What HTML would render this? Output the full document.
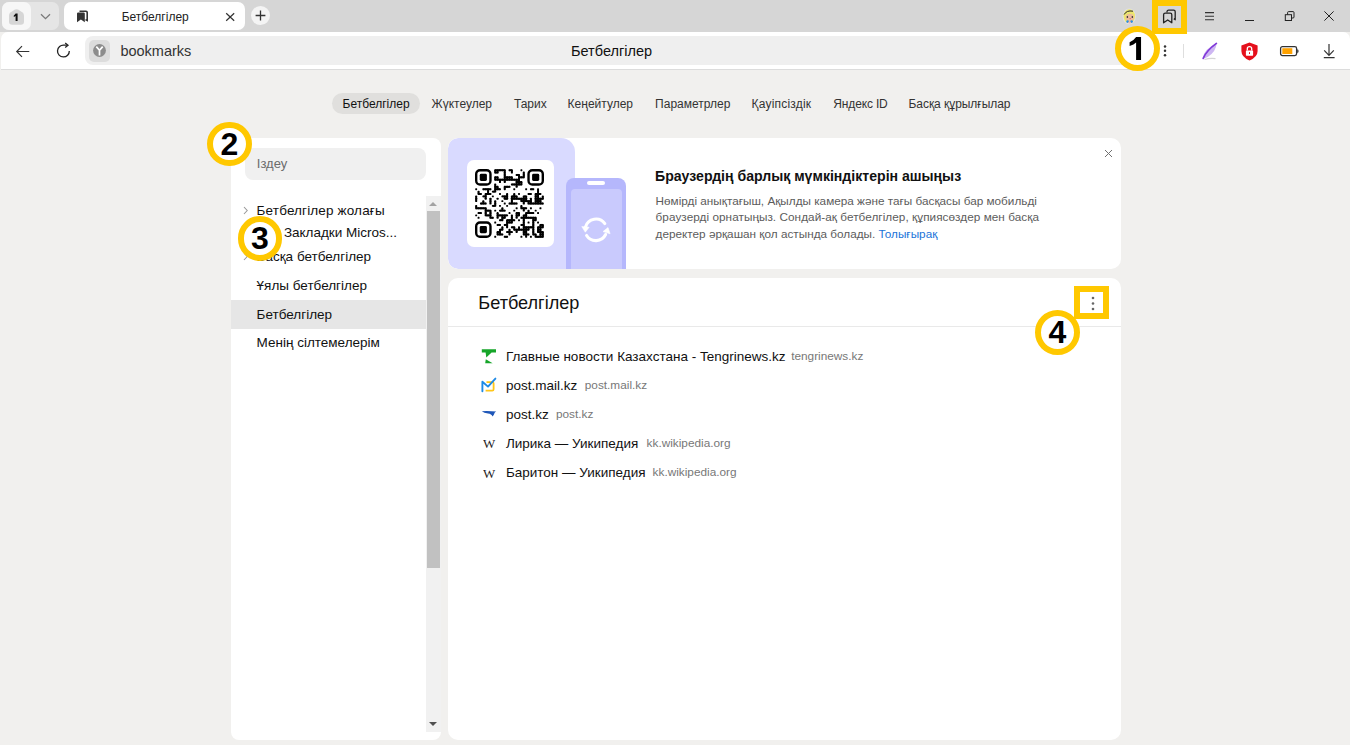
<!DOCTYPE html>
<html><head><meta charset="utf-8">
<style>
*{box-sizing:border-box;margin:0;padding:0}
html,body{width:1350px;height:745px;overflow:hidden}
body{background:#f1f0ee;font-family:"Liberation Sans",sans-serif;color:#000;position:relative}
.abs{position:absolute}
.t{position:absolute;white-space:nowrap;line-height:1}
svg{position:absolute;overflow:visible}
</style></head>
<body>
<div class="abs" style="left:0;top:0;width:1350px;height:32px;background:#d6d6d6"></div>
<div class="abs" style="left:2px;top:2px;width:57px;height:28px;background:#e5e5e5;border-radius:7px"></div>
<div class="abs" style="left:2px;top:2px;width:29px;height:28px;background:#f7f7f7;border-radius:7px"></div>
<svg style="left:8px;top:8px" width="17" height="18" viewBox="0 0 17 18"><path d="M7 1.6 Q8.5 0.8 10 1.6 L14.6 4.6 Q16 5.6 16 7.4 V13.5 Q16 16.7 12.8 16.7 H4.2 Q1 16.7 1 13.5 V7.4 Q1 5.6 2.4 4.6 Z" fill="#d6d6d6"/></svg>
<svg style="left:13px;top:12.5px" width="6" height="9" viewBox="0 0 6 9"><path d="M2.6 0.6 H4.6 V7.9 H2.6 V3.1 Q1.8 3.6 0.8 3.9 V2.4 Q2 1.8 2.6 0.6 Z" fill="#111"/></svg>
<svg style="left:40px;top:13px" width="11" height="7" viewBox="0 0 11 7"><path d="M1 1.2 L5.5 5.6 L10 1.2" fill="none" stroke="#7a7a7a" stroke-width="1.3"/></svg>
<div class="abs" style="left:64px;top:2px;width:181px;height:28px;background:#fff;border-radius:7px"></div>
<svg style="left:76px;top:10px" width="12" height="13" viewBox="0 0 12 13"><path d="M3.5 1.2 H10 Q11.2 1.2 11.2 2.4 V10.5 L9.5 9.6" fill="none" stroke="#333" stroke-width="1.6"/><path d="M1 3.6 Q1 2.4 2.2 2.4 H7.6 Q8.8 2.4 8.8 3.6 V12.2 L4.9 9.6 L1 12.2 Z" fill="#333"/></svg>
<div class="t" style="left:121.70px;top:10.85px;font-size:12px;color:#222;font-weight:normal;">Бетбелгілер</div>
<svg style="left:225.8px;top:12.7px" width="8.4" height="8" viewBox="0 0 8.4 8"><path d="M0.2 0.2 L8.2 7.8 M8.2 0.2 L0.2 7.8" stroke="#333" stroke-width="1.2"/></svg>
<div class="abs" style="left:250.9px;top:5.7px;width:19.6px;height:19.6px;background:#f4f4f4;border-radius:50%"></div>
<svg style="left:255.2px;top:10.0px" width="11" height="11" viewBox="0 0 11 11"><path d="M5.5 0.6 V10.4 M0.6 5.5 H10.4" stroke="#333" stroke-width="1.3"/></svg>
<svg style="left:1122px;top:8px" width="15" height="17" viewBox="0 0 15 17">
<ellipse cx="7.2" cy="8.4" rx="6.6" ry="7.9" fill="#e2e2e6"/>
<ellipse cx="7.3" cy="8.3" rx="5.7" ry="7" fill="#ece66e"/>
<ellipse cx="7.8" cy="9.6" rx="4.1" ry="3.9" fill="#ebbd9a"/>
<ellipse cx="5.4" cy="9.1" rx="0.75" ry="1" fill="#333"/><ellipse cx="10.3" cy="9.1" rx="0.75" ry="1" fill="#333"/>
<circle cx="8.2" cy="10.6" r="0.7" fill="#e04a8a"/>
<circle cx="5.6" cy="13.6" r="1.3" fill="#2a8ee8"/><circle cx="9.6" cy="13.6" r="1.3" fill="#2a8ee8"/>
<ellipse cx="7.6" cy="14.6" rx="1.4" ry="1" fill="#f0b0b8"/>
<path d="M2.2 6.5 Q4.5 2 11 3.2" stroke="#2a2a2a" stroke-width="1" fill="none"/>
</svg>
<svg style="left:1162px;top:9px" width="15" height="16" viewBox="0 0 15 16"><path d="M5 3.6 V2.8 Q5 1.2 6.6 1.2 H11.6 Q13.2 1.2 13.2 2.8 V10.8 L11.8 9.8" fill="none" stroke="#222" stroke-width="1.3" stroke-linejoin="round"/><path d="M1.6 13.8 V5.8 Q1.6 4.2 3.2 4.2 H8.2 Q9.8 4.2 9.8 5.8 V13.8 L5.7 11 Z" fill="none" stroke="#222" stroke-width="1.3" stroke-linejoin="round"/></svg>
<svg style="left:1204px;top:11px" width="11" height="10" viewBox="0 0 11 10"><path d="M1 1.6 H10 M1 5.2 H10 M1 8.8 H10" stroke="#333" stroke-width="1.1"/></svg>
<div class="abs" style="left:1245px;top:19.8px;width:9px;height:1px;background:#222"></div>
<svg style="left:1283px;top:10px" width="13" height="13" viewBox="0 0 13 13"><rect x="2.3" y="4.7" width="6.2" height="5.8" fill="none" stroke="#222" stroke-width="1"/><path d="M4.6 4.7 V2.6 Q4.6 1.6 5.6 1.6 H10 Q11 1.6 11 2.6 V7 Q11 8 10 8 H8.5" fill="none" stroke="#222" stroke-width="1"/></svg>
<svg style="left:1324px;top:11px" width="10" height="10" viewBox="0 0 10 10"><path d="M0.4 0.4 L9.6 9.6 M9.6 0.4 L0.4 9.6" stroke="#222" stroke-width="1"/></svg>
<div class="abs" style="left:1px;top:32px;width:1349px;height:38px;background:#fff;border-radius:7px 7px 0 0;border-bottom:1px solid #dcdcdc"></div>
<svg style="left:15px;top:44px" width="16" height="15" viewBox="0 0 16 15"><path d="M14.3 7.5 H2 M7 2.1 L1.7 7.5 L7 12.9" fill="none" stroke="#333" stroke-width="1.15"/></svg>
<svg style="left:55.8px;top:42.2px" width="17" height="17" viewBox="0 0 17 17"><path d="M13.3 8.9 A5.9 5.9 0 1 1 8 3.2 H11" fill="none" stroke="#222" stroke-width="1.3"/><path d="M9.2 0.9 L12 3.2 L9.2 5.5" fill="none" stroke="#222" stroke-width="1.3"/></svg>
<div class="abs" style="left:85px;top:36px;width:1070px;height:29px;background:#efefef;border-radius:8px"></div>
<div class="abs" style="left:89px;top:40px;width:21px;height:21.5px;background:#dcdcdc;border-radius:5px"></div>
<svg style="left:93px;top:44px" width="13" height="13" viewBox="0 0 13 13"><circle cx="6.5" cy="6.5" r="6.4" fill="#8c8c8c"/><path d="M3.3 2.6 L6.5 6.3 L9.7 2.6 M6.5 6.3 V11.5" fill="none" stroke="#fff" stroke-width="1.7"/></svg>
<div class="t" style="left:120.40px;top:43.74px;font-size:14.5px;color:#333;font-weight:normal;">bookmarks</div>
<div class="t" style="left:571.00px;top:43.74px;font-size:14.5px;color:#111;font-weight:normal;">Бетбелгілер</div>
<svg style="left:1163px;top:45px" width="4" height="12" viewBox="0 0 4 12"><circle cx="2" cy="1.4" r="1.25" fill="#333"/><circle cx="2" cy="5.8" r="1.25" fill="#333"/><circle cx="2" cy="10.2" r="1.25" fill="#333"/></svg>
<div class="abs" style="left:1183px;top:44px;width:1px;height:14px;background:#dedede"></div>
<svg style="left:1201px;top:42px" width="18" height="19" viewBox="0 0 18 19">
<path d="M1.8 16.8 Q1.8 7.6 15.8 1 Q14.8 10 7 14.8 Q4.5 16.2 1.8 16.8 Z" fill="#cdb6f2"/>
<path d="M2.2 16.4 Q5.5 8.5 15.4 1.4" fill="none" stroke="#8038d8" stroke-width="1.7" stroke-linecap="round"/>
<path d="M3.5 17.6 Q9 15.8 14.5 16.6" fill="none" stroke="#d4d4d4" stroke-width="1.1"/>
</svg>
<svg style="left:1240px;top:41.5px" width="19" height="19" viewBox="0 0 19 19">
<path d="M9.5 0.6 L17.6 3.6 V9 Q17.6 15 9.5 18.5 Q1.4 15 1.4 9 V3.6 Z" fill="#e5101c"/>
<rect x="5.9" y="8.4" width="7.2" height="5.3" rx="0.6" fill="#fff"/>
<path d="M7.3 8.6 V6.8 Q7.3 4.7 9.5 4.7 Q11.7 4.7 11.7 6.8 V8.6" fill="none" stroke="#fff" stroke-width="1.3"/>
<rect x="9" y="10.2" width="1" height="1.8" fill="#e5101c"/>
</svg>
<svg style="left:1279px;top:45px" width="21" height="12" viewBox="0 0 21 12">
<rect x="1.6" y="1.6" width="16" height="9" rx="1.8" fill="#fff" stroke="#333" stroke-width="1.3"/>
<rect x="3.3" y="3.2" width="10" height="5.8" fill="#ffa200"/>
<path d="M18.2 4.2 Q19.6 4.2 19.6 6.1 Q19.6 8 18.2 8 Z" fill="#333"/>
</svg>
<svg style="left:1322px;top:43px" width="14" height="16" viewBox="0 0 14 16"><path d="M7 1 V12.3 M2.2 7.4 L7 12.3 L11.8 7.4 M1.8 14.6 H12.6" fill="none" stroke="#333" stroke-width="1.2"/></svg>
<div class="abs" style="left:332px;top:93px;width:88px;height:21px;background:#e0dfdd;border-radius:11px"></div>
<div class="t" style="left:342.50px;top:97.85px;font-size:12px;color:#111;font-weight:normal;">Бетбелгілер</div>
<div class="t" style="left:431.60px;top:97.85px;font-size:12px;color:#333;font-weight:normal;">Жүктеулер</div>
<div class="t" style="left:513.90px;top:97.85px;font-size:12px;color:#333;font-weight:normal;">Тарих</div>
<div class="t" style="left:567.60px;top:97.85px;font-size:12px;color:#333;font-weight:normal;">Кеңейтулер</div>
<div class="t" style="left:655.10px;top:97.85px;font-size:12px;color:#333;font-weight:normal;">Параметрлер</div>
<div class="t" style="left:751.60px;top:97.85px;font-size:12px;color:#333;font-weight:normal;letter-spacing:0.2px">Қауіпсіздік</div>
<div class="t" style="left:833.30px;top:97.85px;font-size:12px;color:#333;font-weight:normal;letter-spacing:-0.15px">Яндекс ID</div>
<div class="t" style="left:908.50px;top:97.85px;font-size:12px;color:#333;font-weight:normal;letter-spacing:-0.05px">Басқа құрылғылар</div>
<div class="abs" style="left:231px;top:138px;width:210px;height:602px;background:#fff;border-radius:8px;overflow:hidden"></div>
<div class="abs" style="left:245px;top:148px;width:181px;height:32px;background:#f0f0f0;border-radius:8px"></div>
<div class="t" style="left:256.80px;top:157.01px;font-size:13px;color:#6b6b6b;font-weight:normal;">Іздеу</div>
<div class="abs" style="left:426px;top:196px;width:15px;height:536px;background:#f1f1f1"></div>
<div class="abs" style="left:427px;top:211px;width:13px;height:357px;background:#c1c1c1"></div>
<svg style="left:428px;top:201px" width="10" height="6" viewBox="0 0 10 6"><path d="M1 5 L5 1 L9 5 Z" fill="#a3a3a3"/></svg>
<svg style="left:428px;top:721px" width="10" height="6" viewBox="0 0 10 6"><path d="M1 1 L5 5 L9 1 Z" fill="#505050"/></svg>
<div class="abs" style="left:231px;top:300px;width:195px;height:28.5px;background:#e6e6e6"></div>
<svg style="left:242px;top:206px" width="7" height="9" viewBox="0 0 7 9"><path d="M2 1 L5.2 4.5 L2 8" fill="none" stroke="#9a9a9a" stroke-width="1.1"/></svg>
<svg style="left:242px;top:252px" width="7" height="9" viewBox="0 0 7 9"><path d="M2 1 L5.2 4.5 L2 8" fill="none" stroke="#9a9a9a" stroke-width="1.1"/></svg>
<div class="t" style="left:256.60px;top:203.58px;font-size:13.5px;color:#111;font-weight:normal;letter-spacing:0.15px">Бетбелгілер жолағы</div>
<div class="t" style="left:283.90px;top:225.58px;font-size:13.5px;color:#111;font-weight:normal;">Закладки Micros...</div>
<div class="t" style="left:256.60px;top:249.58px;font-size:13.5px;color:#111;font-weight:normal;">Басқа бетбелгілер</div>
<div class="t" style="left:256.60px;top:278.58px;font-size:13.5px;color:#111;font-weight:normal;">Ұялы бетбелгілер</div>
<div class="t" style="left:256.60px;top:307.58px;font-size:13.5px;color:#111;font-weight:normal;">Бетбелгілер</div>
<div class="t" style="left:256.60px;top:335.58px;font-size:13.5px;color:#111;font-weight:normal;">Менің сілтемелерім</div>
<div class="abs" style="left:448px;top:138px;width:673px;height:131px;background:#fff;border-radius:10px;overflow:hidden"><div class="abs" style="left:0;top:0;width:127px;height:131px;background:#d9daff;border-radius:10px 14px 0 10px"></div><div class="abs" style="left:118px;top:39.5px;width:60px;height:92px;background:#b5b7fc;border-radius:8px 8px 0 0"></div><div class="abs" style="left:122.8px;top:50.8px;width:50.8px;height:85px;background:#c9cafd;border-radius:4px"></div><div class="abs" style="left:139px;top:43.4px;width:18px;height:3.6px;background:#fff;border-radius:2px"></div></div>
<div class="abs" style="left:466.5px;top:160px;width:87px;height:87px;background:#fff;border-radius:7px"></div>
<svg class="abs" style="left:475px;top:169px" width="69" height="69" viewBox="0 0 69 69" fill="#000"><rect x="19.25" y="0.21" width="1.95" height="1.95" rx="0.59"/><rect x="20.22" y="0.21" width="2.38" height="1.95"/><rect x="19.25" y="1.19" width="1.95" height="2.38"/><rect x="21.63" y="0.21" width="1.95" height="1.95" rx="0.59"/><rect x="22.60" y="0.21" width="2.38" height="1.95"/><rect x="21.63" y="1.19" width="1.95" height="2.38"/><rect x="24.01" y="0.21" width="1.95" height="1.95" rx="0.59"/><rect x="24.98" y="0.21" width="2.38" height="1.95"/><rect x="26.39" y="0.21" width="1.95" height="1.95" rx="0.59"/><rect x="27.36" y="0.21" width="2.38" height="1.95"/><rect x="28.77" y="0.21" width="1.95" height="1.95" rx="0.59"/><rect x="28.77" y="1.19" width="1.95" height="2.38"/><rect x="33.52" y="0.21" width="1.95" height="1.95" rx="0.59"/><rect x="34.50" y="0.21" width="2.38" height="1.95"/><rect x="35.90" y="0.21" width="1.95" height="1.95" rx="0.59"/><rect x="35.90" y="1.19" width="1.95" height="2.38"/><rect x="45.42" y="0.21" width="1.95" height="1.95" rx="0.59"/><rect x="19.25" y="2.59" width="1.95" height="1.95" rx="0.59"/><rect x="20.22" y="2.59" width="2.38" height="1.95"/><rect x="21.63" y="2.59" width="1.95" height="1.95" rx="0.59"/><rect x="28.77" y="2.59" width="1.95" height="1.95" rx="0.59"/><rect x="28.77" y="3.57" width="1.95" height="2.38"/><rect x="35.90" y="2.59" width="1.95" height="1.95" rx="0.59"/><rect x="47.80" y="2.59" width="1.95" height="1.95" rx="0.59"/><rect x="47.80" y="3.57" width="1.95" height="2.38"/><rect x="28.77" y="4.97" width="1.95" height="1.95" rx="0.59"/><rect x="28.77" y="5.95" width="1.95" height="2.38"/><rect x="40.66" y="4.97" width="1.95" height="1.95" rx="0.59"/><rect x="41.64" y="4.97" width="2.38" height="1.95"/><rect x="43.04" y="4.97" width="1.95" height="1.95" rx="0.59"/><rect x="43.04" y="5.95" width="1.95" height="2.38"/><rect x="47.80" y="4.97" width="1.95" height="1.95" rx="0.59"/><rect x="47.80" y="5.95" width="1.95" height="2.38"/><rect x="19.25" y="7.35" width="1.95" height="1.95" rx="0.59"/><rect x="20.22" y="7.35" width="2.38" height="1.95"/><rect x="19.25" y="8.33" width="1.95" height="2.38"/><rect x="21.63" y="7.35" width="1.95" height="1.95" rx="0.59"/><rect x="21.63" y="8.33" width="1.95" height="2.38"/><rect x="28.77" y="7.35" width="1.95" height="1.95" rx="0.59"/><rect x="29.74" y="7.35" width="2.38" height="1.95"/><rect x="28.77" y="8.33" width="1.95" height="2.38"/><rect x="31.15" y="7.35" width="1.95" height="1.95" rx="0.59"/><rect x="32.12" y="7.35" width="2.38" height="1.95"/><rect x="31.15" y="8.33" width="1.95" height="2.38"/><rect x="33.52" y="7.35" width="1.95" height="1.95" rx="0.59"/><rect x="34.50" y="7.35" width="2.38" height="1.95"/><rect x="33.52" y="8.33" width="1.95" height="2.38"/><rect x="35.90" y="7.35" width="1.95" height="1.95" rx="0.59"/><rect x="35.90" y="8.33" width="1.95" height="2.38"/><rect x="43.04" y="7.35" width="1.95" height="1.95" rx="0.59"/><rect x="44.02" y="7.35" width="2.38" height="1.95"/><rect x="43.04" y="8.33" width="1.95" height="2.38"/><rect x="45.42" y="7.35" width="1.95" height="1.95" rx="0.59"/><rect x="46.40" y="7.35" width="2.38" height="1.95"/><rect x="47.80" y="7.35" width="1.95" height="1.95" rx="0.59"/><rect x="19.25" y="9.73" width="1.95" height="1.95" rx="0.59"/><rect x="20.22" y="9.73" width="2.38" height="1.95"/><rect x="21.63" y="9.73" width="1.95" height="1.95" rx="0.59"/><rect x="22.60" y="9.73" width="2.38" height="1.95"/><rect x="24.01" y="9.73" width="1.95" height="1.95" rx="0.59"/><rect x="24.98" y="9.73" width="2.38" height="1.95"/><rect x="24.01" y="10.71" width="1.95" height="2.38"/><rect x="26.39" y="9.73" width="1.95" height="1.95" rx="0.59"/><rect x="27.36" y="9.73" width="2.38" height="1.95"/><rect x="28.77" y="9.73" width="1.95" height="1.95" rx="0.59"/><rect x="29.74" y="9.73" width="2.38" height="1.95"/><rect x="28.77" y="10.71" width="1.95" height="2.38"/><rect x="31.15" y="9.73" width="1.95" height="1.95" rx="0.59"/><rect x="32.12" y="9.73" width="2.38" height="1.95"/><rect x="33.52" y="9.73" width="1.95" height="1.95" rx="0.59"/><rect x="34.50" y="9.73" width="2.38" height="1.95"/><rect x="35.90" y="9.73" width="1.95" height="1.95" rx="0.59"/><rect x="36.88" y="9.73" width="2.38" height="1.95"/><rect x="38.28" y="9.73" width="1.95" height="1.95" rx="0.59"/><rect x="39.26" y="9.73" width="2.38" height="1.95"/><rect x="40.66" y="9.73" width="1.95" height="1.95" rx="0.59"/><rect x="41.64" y="9.73" width="2.38" height="1.95"/><rect x="40.66" y="10.71" width="1.95" height="2.38"/><rect x="43.04" y="9.73" width="1.95" height="1.95" rx="0.59"/><rect x="43.04" y="10.71" width="1.95" height="2.38"/><rect x="24.01" y="12.11" width="1.95" height="1.95" rx="0.59"/><rect x="28.77" y="12.11" width="1.95" height="1.95" rx="0.59"/><rect x="40.66" y="12.11" width="1.95" height="1.95" rx="0.59"/><rect x="41.64" y="12.11" width="2.38" height="1.95"/><rect x="40.66" y="13.09" width="1.95" height="2.38"/><rect x="43.04" y="12.11" width="1.95" height="1.95" rx="0.59"/><rect x="44.02" y="12.11" width="2.38" height="1.95"/><rect x="43.04" y="13.09" width="1.95" height="2.38"/><rect x="45.42" y="12.11" width="1.95" height="1.95" rx="0.59"/><rect x="45.42" y="13.09" width="1.95" height="2.38"/><rect x="19.25" y="14.49" width="1.95" height="1.95" rx="0.59"/><rect x="19.25" y="15.47" width="1.95" height="2.38"/><rect x="35.90" y="14.49" width="1.95" height="1.95" rx="0.59"/><rect x="36.88" y="14.49" width="2.38" height="1.95"/><rect x="38.28" y="14.49" width="1.95" height="1.95" rx="0.59"/><rect x="39.26" y="14.49" width="2.38" height="1.95"/><rect x="40.66" y="14.49" width="1.95" height="1.95" rx="0.59"/><rect x="41.64" y="14.49" width="2.38" height="1.95"/><rect x="40.66" y="15.47" width="1.95" height="2.38"/><rect x="43.04" y="14.49" width="1.95" height="1.95" rx="0.59"/><rect x="44.02" y="14.49" width="2.38" height="1.95"/><rect x="45.42" y="14.49" width="1.95" height="1.95" rx="0.59"/><rect x="19.25" y="16.87" width="1.95" height="1.95" rx="0.59"/><rect x="20.22" y="16.87" width="2.38" height="1.95"/><rect x="19.25" y="17.84" width="1.95" height="2.38"/><rect x="21.63" y="16.87" width="1.95" height="1.95" rx="0.59"/><rect x="21.63" y="17.84" width="1.95" height="2.38"/><rect x="28.77" y="16.87" width="1.95" height="1.95" rx="0.59"/><rect x="29.74" y="16.87" width="2.38" height="1.95"/><rect x="28.77" y="17.84" width="1.95" height="2.38"/><rect x="31.15" y="16.87" width="1.95" height="1.95" rx="0.59"/><rect x="32.12" y="16.87" width="2.38" height="1.95"/><rect x="33.52" y="16.87" width="1.95" height="1.95" rx="0.59"/><rect x="40.66" y="16.87" width="1.95" height="1.95" rx="0.59"/><rect x="0.21" y="19.25" width="1.95" height="1.95" rx="0.59"/><rect x="7.35" y="19.25" width="1.95" height="1.95" rx="0.59"/><rect x="8.33" y="19.25" width="2.38" height="1.95"/><rect x="9.73" y="19.25" width="1.95" height="1.95" rx="0.59"/><rect x="10.71" y="19.25" width="2.38" height="1.95"/><rect x="12.11" y="19.25" width="1.95" height="1.95" rx="0.59"/><rect x="13.09" y="19.25" width="2.38" height="1.95"/><rect x="12.11" y="20.22" width="1.95" height="2.38"/><rect x="14.49" y="19.25" width="1.95" height="1.95" rx="0.59"/><rect x="19.25" y="19.25" width="1.95" height="1.95" rx="0.59"/><rect x="20.22" y="19.25" width="2.38" height="1.95"/><rect x="19.25" y="20.22" width="1.95" height="2.38"/><rect x="21.63" y="19.25" width="1.95" height="1.95" rx="0.59"/><rect x="22.60" y="19.25" width="2.38" height="1.95"/><rect x="24.01" y="19.25" width="1.95" height="1.95" rx="0.59"/><rect x="28.77" y="19.25" width="1.95" height="1.95" rx="0.59"/><rect x="38.28" y="19.25" width="1.95" height="1.95" rx="0.59"/><rect x="50.18" y="19.25" width="1.95" height="1.95" rx="0.59"/><rect x="54.94" y="19.25" width="1.95" height="1.95" rx="0.59"/><rect x="55.91" y="19.25" width="2.38" height="1.95"/><rect x="57.32" y="19.25" width="1.95" height="1.95" rx="0.59"/><rect x="62.08" y="19.25" width="1.95" height="1.95" rx="0.59"/><rect x="62.08" y="20.22" width="1.95" height="2.38"/><rect x="2.59" y="21.63" width="1.95" height="1.95" rx="0.59"/><rect x="2.59" y="22.60" width="1.95" height="2.38"/><rect x="12.11" y="21.63" width="1.95" height="1.95" rx="0.59"/><rect x="12.11" y="22.60" width="1.95" height="2.38"/><rect x="16.87" y="21.63" width="1.95" height="1.95" rx="0.59"/><rect x="17.84" y="21.63" width="2.38" height="1.95"/><rect x="19.25" y="21.63" width="1.95" height="1.95" rx="0.59"/><rect x="62.08" y="21.63" width="1.95" height="1.95" rx="0.59"/><rect x="62.08" y="22.60" width="1.95" height="2.38"/><rect x="2.59" y="24.01" width="1.95" height="1.95" rx="0.59"/><rect x="3.57" y="24.01" width="2.38" height="1.95"/><rect x="4.97" y="24.01" width="1.95" height="1.95" rx="0.59"/><rect x="9.73" y="24.01" width="1.95" height="1.95" rx="0.59"/><rect x="10.71" y="24.01" width="2.38" height="1.95"/><rect x="9.73" y="24.98" width="1.95" height="2.38"/><rect x="12.11" y="24.01" width="1.95" height="1.95" rx="0.59"/><rect x="13.09" y="24.01" width="2.38" height="1.95"/><rect x="14.49" y="24.01" width="1.95" height="1.95" rx="0.59"/><rect x="24.01" y="24.01" width="1.95" height="1.95" rx="0.59"/><rect x="31.15" y="24.01" width="1.95" height="1.95" rx="0.59"/><rect x="31.15" y="24.98" width="1.95" height="2.38"/><rect x="38.28" y="24.01" width="1.95" height="1.95" rx="0.59"/><rect x="38.28" y="24.98" width="1.95" height="2.38"/><rect x="43.04" y="24.01" width="1.95" height="1.95" rx="0.59"/><rect x="52.56" y="24.01" width="1.95" height="1.95" rx="0.59"/><rect x="53.53" y="24.01" width="2.38" height="1.95"/><rect x="54.94" y="24.01" width="1.95" height="1.95" rx="0.59"/><rect x="59.70" y="24.01" width="1.95" height="1.95" rx="0.59"/><rect x="60.67" y="24.01" width="2.38" height="1.95"/><rect x="59.70" y="24.98" width="1.95" height="2.38"/><rect x="62.08" y="24.01" width="1.95" height="1.95" rx="0.59"/><rect x="63.05" y="24.01" width="2.38" height="1.95"/><rect x="62.08" y="24.98" width="1.95" height="2.38"/><rect x="64.46" y="24.01" width="1.95" height="1.95" rx="0.59"/><rect x="0.21" y="26.39" width="1.95" height="1.95" rx="0.59"/><rect x="0.21" y="27.36" width="1.95" height="2.38"/><rect x="7.35" y="26.39" width="1.95" height="1.95" rx="0.59"/><rect x="8.33" y="26.39" width="2.38" height="1.95"/><rect x="9.73" y="26.39" width="1.95" height="1.95" rx="0.59"/><rect x="9.73" y="27.36" width="1.95" height="2.38"/><rect x="16.87" y="26.39" width="1.95" height="1.95" rx="0.59"/><rect x="26.39" y="26.39" width="1.95" height="1.95" rx="0.59"/><rect x="27.36" y="26.39" width="2.38" height="1.95"/><rect x="28.77" y="26.39" width="1.95" height="1.95" rx="0.59"/><rect x="29.74" y="26.39" width="2.38" height="1.95"/><rect x="28.77" y="27.36" width="1.95" height="2.38"/><rect x="31.15" y="26.39" width="1.95" height="1.95" rx="0.59"/><rect x="31.15" y="27.36" width="1.95" height="2.38"/><rect x="35.90" y="26.39" width="1.95" height="1.95" rx="0.59"/><rect x="36.88" y="26.39" width="2.38" height="1.95"/><rect x="35.90" y="27.36" width="1.95" height="2.38"/><rect x="38.28" y="26.39" width="1.95" height="1.95" rx="0.59"/><rect x="39.26" y="26.39" width="2.38" height="1.95"/><rect x="38.28" y="27.36" width="1.95" height="2.38"/><rect x="40.66" y="26.39" width="1.95" height="1.95" rx="0.59"/><rect x="40.66" y="27.36" width="1.95" height="2.38"/><rect x="47.80" y="26.39" width="1.95" height="1.95" rx="0.59"/><rect x="48.78" y="26.39" width="2.38" height="1.95"/><rect x="47.80" y="27.36" width="1.95" height="2.38"/><rect x="50.18" y="26.39" width="1.95" height="1.95" rx="0.59"/><rect x="50.18" y="27.36" width="1.95" height="2.38"/><rect x="59.70" y="26.39" width="1.95" height="1.95" rx="0.59"/><rect x="60.67" y="26.39" width="2.38" height="1.95"/><rect x="59.70" y="27.36" width="1.95" height="2.38"/><rect x="62.08" y="26.39" width="1.95" height="1.95" rx="0.59"/><rect x="62.08" y="27.36" width="1.95" height="2.38"/><rect x="66.83" y="26.39" width="1.95" height="1.95" rx="0.59"/><rect x="66.83" y="27.36" width="1.95" height="2.38"/><rect x="0.21" y="28.77" width="1.95" height="1.95" rx="0.59"/><rect x="0.21" y="29.74" width="1.95" height="2.38"/><rect x="9.73" y="28.77" width="1.95" height="1.95" rx="0.59"/><rect x="14.49" y="28.77" width="1.95" height="1.95" rx="0.59"/><rect x="14.49" y="29.74" width="1.95" height="2.38"/><rect x="21.63" y="28.77" width="1.95" height="1.95" rx="0.59"/><rect x="28.77" y="28.77" width="1.95" height="1.95" rx="0.59"/><rect x="29.74" y="28.77" width="2.38" height="1.95"/><rect x="31.15" y="28.77" width="1.95" height="1.95" rx="0.59"/><rect x="35.90" y="28.77" width="1.95" height="1.95" rx="0.59"/><rect x="36.88" y="28.77" width="2.38" height="1.95"/><rect x="35.90" y="29.74" width="1.95" height="2.38"/><rect x="38.28" y="28.77" width="1.95" height="1.95" rx="0.59"/><rect x="39.26" y="28.77" width="2.38" height="1.95"/><rect x="40.66" y="28.77" width="1.95" height="1.95" rx="0.59"/><rect x="41.64" y="28.77" width="2.38" height="1.95"/><rect x="43.04" y="28.77" width="1.95" height="1.95" rx="0.59"/><rect x="44.02" y="28.77" width="2.38" height="1.95"/><rect x="45.42" y="28.77" width="1.95" height="1.95" rx="0.59"/><rect x="46.40" y="28.77" width="2.38" height="1.95"/><rect x="45.42" y="29.74" width="1.95" height="2.38"/><rect x="47.80" y="28.77" width="1.95" height="1.95" rx="0.59"/><rect x="48.78" y="28.77" width="2.38" height="1.95"/><rect x="47.80" y="29.74" width="1.95" height="2.38"/><rect x="50.18" y="28.77" width="1.95" height="1.95" rx="0.59"/><rect x="50.18" y="29.74" width="1.95" height="2.38"/><rect x="54.94" y="28.77" width="1.95" height="1.95" rx="0.59"/><rect x="54.94" y="29.74" width="1.95" height="2.38"/><rect x="59.70" y="28.77" width="1.95" height="1.95" rx="0.59"/><rect x="60.67" y="28.77" width="2.38" height="1.95"/><rect x="59.70" y="29.74" width="1.95" height="2.38"/><rect x="62.08" y="28.77" width="1.95" height="1.95" rx="0.59"/><rect x="63.05" y="28.77" width="2.38" height="1.95"/><rect x="62.08" y="29.74" width="1.95" height="2.38"/><rect x="64.46" y="28.77" width="1.95" height="1.95" rx="0.59"/><rect x="65.43" y="28.77" width="2.38" height="1.95"/><rect x="64.46" y="29.74" width="1.95" height="2.38"/><rect x="66.83" y="28.77" width="1.95" height="1.95" rx="0.59"/><rect x="0.21" y="31.15" width="1.95" height="1.95" rx="0.59"/><rect x="7.35" y="31.15" width="1.95" height="1.95" rx="0.59"/><rect x="7.35" y="32.12" width="1.95" height="2.38"/><rect x="14.49" y="31.15" width="1.95" height="1.95" rx="0.59"/><rect x="14.49" y="32.12" width="1.95" height="2.38"/><rect x="19.25" y="31.15" width="1.95" height="1.95" rx="0.59"/><rect x="19.25" y="32.12" width="1.95" height="2.38"/><rect x="26.39" y="31.15" width="1.95" height="1.95" rx="0.59"/><rect x="35.90" y="31.15" width="1.95" height="1.95" rx="0.59"/><rect x="35.90" y="32.12" width="1.95" height="2.38"/><rect x="45.42" y="31.15" width="1.95" height="1.95" rx="0.59"/><rect x="46.40" y="31.15" width="2.38" height="1.95"/><rect x="47.80" y="31.15" width="1.95" height="1.95" rx="0.59"/><rect x="48.78" y="31.15" width="2.38" height="1.95"/><rect x="47.80" y="32.12" width="1.95" height="2.38"/><rect x="50.18" y="31.15" width="1.95" height="1.95" rx="0.59"/><rect x="51.16" y="31.15" width="2.38" height="1.95"/><rect x="52.56" y="31.15" width="1.95" height="1.95" rx="0.59"/><rect x="53.53" y="31.15" width="2.38" height="1.95"/><rect x="52.56" y="32.12" width="1.95" height="2.38"/><rect x="54.94" y="31.15" width="1.95" height="1.95" rx="0.59"/><rect x="54.94" y="32.12" width="1.95" height="2.38"/><rect x="59.70" y="31.15" width="1.95" height="1.95" rx="0.59"/><rect x="60.67" y="31.15" width="2.38" height="1.95"/><rect x="59.70" y="32.12" width="1.95" height="2.38"/><rect x="62.08" y="31.15" width="1.95" height="1.95" rx="0.59"/><rect x="63.05" y="31.15" width="2.38" height="1.95"/><rect x="62.08" y="32.12" width="1.95" height="2.38"/><rect x="64.46" y="31.15" width="1.95" height="1.95" rx="0.59"/><rect x="64.46" y="32.12" width="1.95" height="2.38"/><rect x="4.97" y="33.52" width="1.95" height="1.95" rx="0.59"/><rect x="5.95" y="33.52" width="2.38" height="1.95"/><rect x="7.35" y="33.52" width="1.95" height="1.95" rx="0.59"/><rect x="8.33" y="33.52" width="2.38" height="1.95"/><rect x="9.73" y="33.52" width="1.95" height="1.95" rx="0.59"/><rect x="14.49" y="33.52" width="1.95" height="1.95" rx="0.59"/><rect x="19.25" y="33.52" width="1.95" height="1.95" rx="0.59"/><rect x="19.25" y="34.50" width="1.95" height="2.38"/><rect x="28.77" y="33.52" width="1.95" height="1.95" rx="0.59"/><rect x="33.52" y="33.52" width="1.95" height="1.95" rx="0.59"/><rect x="34.50" y="33.52" width="2.38" height="1.95"/><rect x="35.90" y="33.52" width="1.95" height="1.95" rx="0.59"/><rect x="36.88" y="33.52" width="2.38" height="1.95"/><rect x="38.28" y="33.52" width="1.95" height="1.95" rx="0.59"/><rect x="39.26" y="33.52" width="2.38" height="1.95"/><rect x="40.66" y="33.52" width="1.95" height="1.95" rx="0.59"/><rect x="47.80" y="33.52" width="1.95" height="1.95" rx="0.59"/><rect x="52.56" y="33.52" width="1.95" height="1.95" rx="0.59"/><rect x="53.53" y="33.52" width="2.38" height="1.95"/><rect x="54.94" y="33.52" width="1.95" height="1.95" rx="0.59"/><rect x="55.91" y="33.52" width="2.38" height="1.95"/><rect x="57.32" y="33.52" width="1.95" height="1.95" rx="0.59"/><rect x="58.29" y="33.52" width="2.38" height="1.95"/><rect x="59.70" y="33.52" width="1.95" height="1.95" rx="0.59"/><rect x="60.67" y="33.52" width="2.38" height="1.95"/><rect x="62.08" y="33.52" width="1.95" height="1.95" rx="0.59"/><rect x="63.05" y="33.52" width="2.38" height="1.95"/><rect x="64.46" y="33.52" width="1.95" height="1.95" rx="0.59"/><rect x="65.43" y="33.52" width="2.38" height="1.95"/><rect x="66.83" y="33.52" width="1.95" height="1.95" rx="0.59"/><rect x="0.21" y="35.90" width="1.95" height="1.95" rx="0.59"/><rect x="0.21" y="36.88" width="1.95" height="2.38"/><rect x="16.87" y="35.90" width="1.95" height="1.95" rx="0.59"/><rect x="17.84" y="35.90" width="2.38" height="1.95"/><rect x="19.25" y="35.90" width="1.95" height="1.95" rx="0.59"/><rect x="24.01" y="35.90" width="1.95" height="1.95" rx="0.59"/><rect x="31.15" y="35.90" width="1.95" height="1.95" rx="0.59"/><rect x="45.42" y="35.90" width="1.95" height="1.95" rx="0.59"/><rect x="45.42" y="36.88" width="1.95" height="2.38"/><rect x="0.21" y="38.28" width="1.95" height="1.95" rx="0.59"/><rect x="1.19" y="38.28" width="2.38" height="1.95"/><rect x="2.59" y="38.28" width="1.95" height="1.95" rx="0.59"/><rect x="3.57" y="38.28" width="2.38" height="1.95"/><rect x="4.97" y="38.28" width="1.95" height="1.95" rx="0.59"/><rect x="5.95" y="38.28" width="2.38" height="1.95"/><rect x="7.35" y="38.28" width="1.95" height="1.95" rx="0.59"/><rect x="8.33" y="38.28" width="2.38" height="1.95"/><rect x="9.73" y="38.28" width="1.95" height="1.95" rx="0.59"/><rect x="9.73" y="39.26" width="1.95" height="2.38"/><rect x="26.39" y="38.28" width="1.95" height="1.95" rx="0.59"/><rect x="26.39" y="39.26" width="1.95" height="2.38"/><rect x="40.66" y="38.28" width="1.95" height="1.95" rx="0.59"/><rect x="45.42" y="38.28" width="1.95" height="1.95" rx="0.59"/><rect x="46.40" y="38.28" width="2.38" height="1.95"/><rect x="47.80" y="38.28" width="1.95" height="1.95" rx="0.59"/><rect x="48.78" y="38.28" width="2.38" height="1.95"/><rect x="47.80" y="39.26" width="1.95" height="2.38"/><rect x="50.18" y="38.28" width="1.95" height="1.95" rx="0.59"/><rect x="54.94" y="38.28" width="1.95" height="1.95" rx="0.59"/><rect x="64.46" y="38.28" width="1.95" height="1.95" rx="0.59"/><rect x="9.73" y="40.66" width="1.95" height="1.95" rx="0.59"/><rect x="10.71" y="40.66" width="2.38" height="1.95"/><rect x="9.73" y="41.64" width="1.95" height="2.38"/><rect x="12.11" y="40.66" width="1.95" height="1.95" rx="0.59"/><rect x="13.09" y="40.66" width="2.38" height="1.95"/><rect x="14.49" y="40.66" width="1.95" height="1.95" rx="0.59"/><rect x="14.49" y="41.64" width="1.95" height="2.38"/><rect x="19.25" y="40.66" width="1.95" height="1.95" rx="0.59"/><rect x="24.01" y="40.66" width="1.95" height="1.95" rx="0.59"/><rect x="24.98" y="40.66" width="2.38" height="1.95"/><rect x="26.39" y="40.66" width="1.95" height="1.95" rx="0.59"/><rect x="27.36" y="40.66" width="2.38" height="1.95"/><rect x="28.77" y="40.66" width="1.95" height="1.95" rx="0.59"/><rect x="38.28" y="40.66" width="1.95" height="1.95" rx="0.59"/><rect x="47.80" y="40.66" width="1.95" height="1.95" rx="0.59"/><rect x="52.56" y="40.66" width="1.95" height="1.95" rx="0.59"/><rect x="52.56" y="41.64" width="1.95" height="2.38"/><rect x="59.70" y="40.66" width="1.95" height="1.95" rx="0.59"/><rect x="2.59" y="43.04" width="1.95" height="1.95" rx="0.59"/><rect x="3.57" y="43.04" width="2.38" height="1.95"/><rect x="4.97" y="43.04" width="1.95" height="1.95" rx="0.59"/><rect x="9.73" y="43.04" width="1.95" height="1.95" rx="0.59"/><rect x="9.73" y="44.02" width="1.95" height="2.38"/><rect x="14.49" y="43.04" width="1.95" height="1.95" rx="0.59"/><rect x="14.49" y="44.02" width="1.95" height="2.38"/><rect x="21.63" y="43.04" width="1.95" height="1.95" rx="0.59"/><rect x="21.63" y="44.02" width="1.95" height="2.38"/><rect x="33.52" y="43.04" width="1.95" height="1.95" rx="0.59"/><rect x="40.66" y="43.04" width="1.95" height="1.95" rx="0.59"/><rect x="41.64" y="43.04" width="2.38" height="1.95"/><rect x="40.66" y="44.02" width="1.95" height="2.38"/><rect x="43.04" y="43.04" width="1.95" height="1.95" rx="0.59"/><rect x="43.04" y="44.02" width="1.95" height="2.38"/><rect x="50.18" y="43.04" width="1.95" height="1.95" rx="0.59"/><rect x="51.16" y="43.04" width="2.38" height="1.95"/><rect x="50.18" y="44.02" width="1.95" height="2.38"/><rect x="52.56" y="43.04" width="1.95" height="1.95" rx="0.59"/><rect x="53.53" y="43.04" width="2.38" height="1.95"/><rect x="54.94" y="43.04" width="1.95" height="1.95" rx="0.59"/><rect x="55.91" y="43.04" width="2.38" height="1.95"/><rect x="57.32" y="43.04" width="1.95" height="1.95" rx="0.59"/><rect x="62.08" y="43.04" width="1.95" height="1.95" rx="0.59"/><rect x="0.21" y="45.42" width="1.95" height="1.95" rx="0.59"/><rect x="9.73" y="45.42" width="1.95" height="1.95" rx="0.59"/><rect x="10.71" y="45.42" width="2.38" height="1.95"/><rect x="12.11" y="45.42" width="1.95" height="1.95" rx="0.59"/><rect x="13.09" y="45.42" width="2.38" height="1.95"/><rect x="14.49" y="45.42" width="1.95" height="1.95" rx="0.59"/><rect x="14.49" y="46.40" width="1.95" height="2.38"/><rect x="21.63" y="45.42" width="1.95" height="1.95" rx="0.59"/><rect x="22.60" y="45.42" width="2.38" height="1.95"/><rect x="21.63" y="46.40" width="1.95" height="2.38"/><rect x="24.01" y="45.42" width="1.95" height="1.95" rx="0.59"/><rect x="24.98" y="45.42" width="2.38" height="1.95"/><rect x="26.39" y="45.42" width="1.95" height="1.95" rx="0.59"/><rect x="27.36" y="45.42" width="2.38" height="1.95"/><rect x="26.39" y="46.40" width="1.95" height="2.38"/><rect x="28.77" y="45.42" width="1.95" height="1.95" rx="0.59"/><rect x="29.74" y="45.42" width="2.38" height="1.95"/><rect x="28.77" y="46.40" width="1.95" height="2.38"/><rect x="31.15" y="45.42" width="1.95" height="1.95" rx="0.59"/><rect x="35.90" y="45.42" width="1.95" height="1.95" rx="0.59"/><rect x="35.90" y="46.40" width="1.95" height="2.38"/><rect x="40.66" y="45.42" width="1.95" height="1.95" rx="0.59"/><rect x="41.64" y="45.42" width="2.38" height="1.95"/><rect x="40.66" y="46.40" width="1.95" height="2.38"/><rect x="43.04" y="45.42" width="1.95" height="1.95" rx="0.59"/><rect x="47.80" y="45.42" width="1.95" height="1.95" rx="0.59"/><rect x="48.78" y="45.42" width="2.38" height="1.95"/><rect x="47.80" y="46.40" width="1.95" height="2.38"/><rect x="50.18" y="45.42" width="1.95" height="1.95" rx="0.59"/><rect x="50.18" y="46.40" width="1.95" height="2.38"/><rect x="2.59" y="47.80" width="1.95" height="1.95" rx="0.59"/><rect x="14.49" y="47.80" width="1.95" height="1.95" rx="0.59"/><rect x="15.47" y="47.80" width="2.38" height="1.95"/><rect x="16.87" y="47.80" width="1.95" height="1.95" rx="0.59"/><rect x="21.63" y="47.80" width="1.95" height="1.95" rx="0.59"/><rect x="26.39" y="47.80" width="1.95" height="1.95" rx="0.59"/><rect x="27.36" y="47.80" width="2.38" height="1.95"/><rect x="26.39" y="48.78" width="1.95" height="2.38"/><rect x="28.77" y="47.80" width="1.95" height="1.95" rx="0.59"/><rect x="35.90" y="47.80" width="1.95" height="1.95" rx="0.59"/><rect x="35.90" y="48.78" width="1.95" height="2.38"/><rect x="40.66" y="47.80" width="1.95" height="1.95" rx="0.59"/><rect x="45.42" y="47.80" width="1.95" height="1.95" rx="0.59"/><rect x="46.40" y="47.80" width="2.38" height="1.95"/><rect x="47.80" y="47.80" width="1.95" height="1.95" rx="0.59"/><rect x="48.78" y="47.80" width="2.38" height="1.95"/><rect x="47.80" y="48.78" width="1.95" height="2.38"/><rect x="50.18" y="47.80" width="1.95" height="1.95" rx="0.59"/><rect x="51.16" y="47.80" width="2.38" height="1.95"/><rect x="52.56" y="47.80" width="1.95" height="1.95" rx="0.59"/><rect x="53.53" y="47.80" width="2.38" height="1.95"/><rect x="54.94" y="47.80" width="1.95" height="1.95" rx="0.59"/><rect x="55.91" y="47.80" width="2.38" height="1.95"/><rect x="57.32" y="47.80" width="1.95" height="1.95" rx="0.59"/><rect x="58.29" y="47.80" width="2.38" height="1.95"/><rect x="57.32" y="48.78" width="1.95" height="2.38"/><rect x="59.70" y="47.80" width="1.95" height="1.95" rx="0.59"/><rect x="59.70" y="48.78" width="1.95" height="2.38"/><rect x="24.01" y="50.18" width="1.95" height="1.95" rx="0.59"/><rect x="24.98" y="50.18" width="2.38" height="1.95"/><rect x="26.39" y="50.18" width="1.95" height="1.95" rx="0.59"/><rect x="31.15" y="50.18" width="1.95" height="1.95" rx="0.59"/><rect x="32.12" y="50.18" width="2.38" height="1.95"/><rect x="31.15" y="51.16" width="1.95" height="2.38"/><rect x="33.52" y="50.18" width="1.95" height="1.95" rx="0.59"/><rect x="34.50" y="50.18" width="2.38" height="1.95"/><rect x="33.52" y="51.16" width="1.95" height="2.38"/><rect x="35.90" y="50.18" width="1.95" height="1.95" rx="0.59"/><rect x="36.88" y="50.18" width="2.38" height="1.95"/><rect x="35.90" y="51.16" width="1.95" height="2.38"/><rect x="38.28" y="50.18" width="1.95" height="1.95" rx="0.59"/><rect x="43.04" y="50.18" width="1.95" height="1.95" rx="0.59"/><rect x="47.80" y="50.18" width="1.95" height="1.95" rx="0.59"/><rect x="47.80" y="51.16" width="1.95" height="2.38"/><rect x="57.32" y="50.18" width="1.95" height="1.95" rx="0.59"/><rect x="58.29" y="50.18" width="2.38" height="1.95"/><rect x="57.32" y="51.16" width="1.95" height="2.38"/><rect x="59.70" y="50.18" width="1.95" height="1.95" rx="0.59"/><rect x="19.25" y="52.56" width="1.95" height="1.95" rx="0.59"/><rect x="31.15" y="52.56" width="1.95" height="1.95" rx="0.59"/><rect x="32.12" y="52.56" width="2.38" height="1.95"/><rect x="31.15" y="53.53" width="1.95" height="2.38"/><rect x="33.52" y="52.56" width="1.95" height="1.95" rx="0.59"/><rect x="34.50" y="52.56" width="2.38" height="1.95"/><rect x="35.90" y="52.56" width="1.95" height="1.95" rx="0.59"/><rect x="47.80" y="52.56" width="1.95" height="1.95" rx="0.59"/><rect x="47.80" y="53.53" width="1.95" height="2.38"/><rect x="52.56" y="52.56" width="1.95" height="1.95" rx="0.59"/><rect x="57.32" y="52.56" width="1.95" height="1.95" rx="0.59"/><rect x="57.32" y="53.53" width="1.95" height="2.38"/><rect x="62.08" y="52.56" width="1.95" height="1.95" rx="0.59"/><rect x="21.63" y="54.94" width="1.95" height="1.95" rx="0.59"/><rect x="22.60" y="54.94" width="2.38" height="1.95"/><rect x="24.01" y="54.94" width="1.95" height="1.95" rx="0.59"/><rect x="28.77" y="54.94" width="1.95" height="1.95" rx="0.59"/><rect x="29.74" y="54.94" width="2.38" height="1.95"/><rect x="31.15" y="54.94" width="1.95" height="1.95" rx="0.59"/><rect x="31.15" y="55.91" width="1.95" height="2.38"/><rect x="45.42" y="54.94" width="1.95" height="1.95" rx="0.59"/><rect x="46.40" y="54.94" width="2.38" height="1.95"/><rect x="47.80" y="54.94" width="1.95" height="1.95" rx="0.59"/><rect x="47.80" y="55.91" width="1.95" height="2.38"/><rect x="57.32" y="54.94" width="1.95" height="1.95" rx="0.59"/><rect x="57.32" y="55.91" width="1.95" height="2.38"/><rect x="64.46" y="54.94" width="1.95" height="1.95" rx="0.59"/><rect x="65.43" y="54.94" width="2.38" height="1.95"/><rect x="64.46" y="55.91" width="1.95" height="2.38"/><rect x="66.83" y="54.94" width="1.95" height="1.95" rx="0.59"/><rect x="66.83" y="55.91" width="1.95" height="2.38"/><rect x="26.39" y="57.32" width="1.95" height="1.95" rx="0.59"/><rect x="26.39" y="58.29" width="1.95" height="2.38"/><rect x="31.15" y="57.32" width="1.95" height="1.95" rx="0.59"/><rect x="35.90" y="57.32" width="1.95" height="1.95" rx="0.59"/><rect x="36.88" y="57.32" width="2.38" height="1.95"/><rect x="38.28" y="57.32" width="1.95" height="1.95" rx="0.59"/><rect x="38.28" y="58.29" width="1.95" height="2.38"/><rect x="43.04" y="57.32" width="1.95" height="1.95" rx="0.59"/><rect x="43.04" y="58.29" width="1.95" height="2.38"/><rect x="47.80" y="57.32" width="1.95" height="1.95" rx="0.59"/><rect x="48.78" y="57.32" width="2.38" height="1.95"/><rect x="47.80" y="58.29" width="1.95" height="2.38"/><rect x="50.18" y="57.32" width="1.95" height="1.95" rx="0.59"/><rect x="51.16" y="57.32" width="2.38" height="1.95"/><rect x="50.18" y="58.29" width="1.95" height="2.38"/><rect x="52.56" y="57.32" width="1.95" height="1.95" rx="0.59"/><rect x="53.53" y="57.32" width="2.38" height="1.95"/><rect x="52.56" y="58.29" width="1.95" height="2.38"/><rect x="54.94" y="57.32" width="1.95" height="1.95" rx="0.59"/><rect x="55.91" y="57.32" width="2.38" height="1.95"/><rect x="57.32" y="57.32" width="1.95" height="1.95" rx="0.59"/><rect x="57.32" y="58.29" width="1.95" height="2.38"/><rect x="62.08" y="57.32" width="1.95" height="1.95" rx="0.59"/><rect x="63.05" y="57.32" width="2.38" height="1.95"/><rect x="62.08" y="58.29" width="1.95" height="2.38"/><rect x="64.46" y="57.32" width="1.95" height="1.95" rx="0.59"/><rect x="65.43" y="57.32" width="2.38" height="1.95"/><rect x="64.46" y="58.29" width="1.95" height="2.38"/><rect x="66.83" y="57.32" width="1.95" height="1.95" rx="0.59"/><rect x="24.01" y="59.70" width="1.95" height="1.95" rx="0.59"/><rect x="24.98" y="59.70" width="2.38" height="1.95"/><rect x="24.01" y="60.67" width="1.95" height="2.38"/><rect x="26.39" y="59.70" width="1.95" height="1.95" rx="0.59"/><rect x="33.52" y="59.70" width="1.95" height="1.95" rx="0.59"/><rect x="33.52" y="60.67" width="1.95" height="2.38"/><rect x="38.28" y="59.70" width="1.95" height="1.95" rx="0.59"/><rect x="39.26" y="59.70" width="2.38" height="1.95"/><rect x="40.66" y="59.70" width="1.95" height="1.95" rx="0.59"/><rect x="41.64" y="59.70" width="2.38" height="1.95"/><rect x="40.66" y="60.67" width="1.95" height="2.38"/><rect x="43.04" y="59.70" width="1.95" height="1.95" rx="0.59"/><rect x="44.02" y="59.70" width="2.38" height="1.95"/><rect x="45.42" y="59.70" width="1.95" height="1.95" rx="0.59"/><rect x="46.40" y="59.70" width="2.38" height="1.95"/><rect x="47.80" y="59.70" width="1.95" height="1.95" rx="0.59"/><rect x="48.78" y="59.70" width="2.38" height="1.95"/><rect x="47.80" y="60.67" width="1.95" height="2.38"/><rect x="50.18" y="59.70" width="1.95" height="1.95" rx="0.59"/><rect x="51.16" y="59.70" width="2.38" height="1.95"/><rect x="50.18" y="60.67" width="1.95" height="2.38"/><rect x="52.56" y="59.70" width="1.95" height="1.95" rx="0.59"/><rect x="57.32" y="59.70" width="1.95" height="1.95" rx="0.59"/><rect x="57.32" y="60.67" width="1.95" height="2.38"/><rect x="62.08" y="59.70" width="1.95" height="1.95" rx="0.59"/><rect x="63.05" y="59.70" width="2.38" height="1.95"/><rect x="62.08" y="60.67" width="1.95" height="2.38"/><rect x="64.46" y="59.70" width="1.95" height="1.95" rx="0.59"/><rect x="64.46" y="60.67" width="1.95" height="2.38"/><rect x="21.63" y="62.08" width="1.95" height="1.95" rx="0.59"/><rect x="22.60" y="62.08" width="2.38" height="1.95"/><rect x="21.63" y="63.05" width="1.95" height="2.38"/><rect x="24.01" y="62.08" width="1.95" height="1.95" rx="0.59"/><rect x="24.01" y="63.05" width="1.95" height="2.38"/><rect x="31.15" y="62.08" width="1.95" height="1.95" rx="0.59"/><rect x="32.12" y="62.08" width="2.38" height="1.95"/><rect x="33.52" y="62.08" width="1.95" height="1.95" rx="0.59"/><rect x="34.50" y="62.08" width="2.38" height="1.95"/><rect x="33.52" y="63.05" width="1.95" height="2.38"/><rect x="35.90" y="62.08" width="1.95" height="1.95" rx="0.59"/><rect x="40.66" y="62.08" width="1.95" height="1.95" rx="0.59"/><rect x="47.80" y="62.08" width="1.95" height="1.95" rx="0.59"/><rect x="48.78" y="62.08" width="2.38" height="1.95"/><rect x="47.80" y="63.05" width="1.95" height="2.38"/><rect x="50.18" y="62.08" width="1.95" height="1.95" rx="0.59"/><rect x="50.18" y="63.05" width="1.95" height="2.38"/><rect x="57.32" y="62.08" width="1.95" height="1.95" rx="0.59"/><rect x="57.32" y="63.05" width="1.95" height="2.38"/><rect x="62.08" y="62.08" width="1.95" height="1.95" rx="0.59"/><rect x="63.05" y="62.08" width="2.38" height="1.95"/><rect x="64.46" y="62.08" width="1.95" height="1.95" rx="0.59"/><rect x="65.43" y="62.08" width="2.38" height="1.95"/><rect x="64.46" y="63.05" width="1.95" height="2.38"/><rect x="66.83" y="62.08" width="1.95" height="1.95" rx="0.59"/><rect x="66.83" y="63.05" width="1.95" height="2.38"/><rect x="21.63" y="64.46" width="1.95" height="1.95" rx="0.59"/><rect x="22.60" y="64.46" width="2.38" height="1.95"/><rect x="24.01" y="64.46" width="1.95" height="1.95" rx="0.59"/><rect x="24.98" y="64.46" width="2.38" height="1.95"/><rect x="26.39" y="64.46" width="1.95" height="1.95" rx="0.59"/><rect x="33.52" y="64.46" width="1.95" height="1.95" rx="0.59"/><rect x="47.80" y="64.46" width="1.95" height="1.95" rx="0.59"/><rect x="48.78" y="64.46" width="2.38" height="1.95"/><rect x="50.18" y="64.46" width="1.95" height="1.95" rx="0.59"/><rect x="51.16" y="64.46" width="2.38" height="1.95"/><rect x="50.18" y="65.43" width="1.95" height="2.38"/><rect x="52.56" y="64.46" width="1.95" height="1.95" rx="0.59"/><rect x="57.32" y="64.46" width="1.95" height="1.95" rx="0.59"/><rect x="58.29" y="64.46" width="2.38" height="1.95"/><rect x="59.70" y="64.46" width="1.95" height="1.95" rx="0.59"/><rect x="59.70" y="65.43" width="1.95" height="2.38"/><rect x="64.46" y="64.46" width="1.95" height="1.95" rx="0.59"/><rect x="65.43" y="64.46" width="2.38" height="1.95"/><rect x="64.46" y="65.43" width="1.95" height="2.38"/><rect x="66.83" y="64.46" width="1.95" height="1.95" rx="0.59"/><rect x="66.83" y="65.43" width="1.95" height="2.38"/><rect x="19.25" y="66.83" width="1.95" height="1.95" rx="0.59"/><rect x="28.77" y="66.83" width="1.95" height="1.95" rx="0.59"/><rect x="29.74" y="66.83" width="2.38" height="1.95"/><rect x="31.15" y="66.83" width="1.95" height="1.95" rx="0.59"/><rect x="45.42" y="66.83" width="1.95" height="1.95" rx="0.59"/><rect x="50.18" y="66.83" width="1.95" height="1.95" rx="0.59"/><rect x="54.94" y="66.83" width="1.95" height="1.95" rx="0.59"/><rect x="59.70" y="66.83" width="1.95" height="1.95" rx="0.59"/><rect x="60.67" y="66.83" width="2.38" height="1.95"/><rect x="62.08" y="66.83" width="1.95" height="1.95" rx="0.59"/><rect x="63.05" y="66.83" width="2.38" height="1.95"/><rect x="64.46" y="66.83" width="1.95" height="1.95" rx="0.59"/><rect x="65.43" y="66.83" width="2.38" height="1.95"/><rect x="66.83" y="66.83" width="1.95" height="1.95" rx="0.59"/><rect x="1.19" y="1.19" width="14.28" height="14.28" rx="3.81" fill="none" stroke="#000" stroke-width="2.38"/><rect x="4.76" y="4.76" width="7.14" height="7.14" rx="1.43"/><rect x="53.53" y="1.19" width="14.28" height="14.28" rx="3.81" fill="none" stroke="#000" stroke-width="2.38"/><rect x="57.10" y="4.76" width="7.14" height="7.14" rx="1.43"/><rect x="1.19" y="53.53" width="14.28" height="14.28" rx="3.81" fill="none" stroke="#000" stroke-width="2.38"/><rect x="4.76" y="57.10" width="7.14" height="7.14" rx="1.43"/></svg>
<svg style="left:580px;top:212px" width="32" height="34" viewBox="0 0 32 34">
<path d="M5.52 15 A10.9 10.9 0 0 1 24.82 11.59" fill="none" stroke="#fff" stroke-width="3.1" stroke-linecap="round"/>
<path d="M6.59 23.5 A10.9 10.9 0 0 0 25.6 22.5" fill="none" stroke="#fff" stroke-width="3.1" stroke-linecap="round"/>
<path d="M1.8 14.6 L9.1 15.3 L5.3 20.2 Z" fill="#fff" stroke="#fff" stroke-width="0.6" stroke-linejoin="round"/>
<path d="M23 19.6 L28 15.6 L30.1 21.8 Z" fill="#fff" stroke="#fff" stroke-width="0.6" stroke-linejoin="round"/>
</svg>
<div class="t" style="left:655.00px;top:169.07px;font-size:14.1px;color:#111;font-weight:bold;">Браузердің барлық мүмкіндіктерін ашыңыз</div>
<div class="t" style="left:655.60px;top:195.06px;font-size:11.75px;color:#5c5c5c;font-weight:normal;">Нөмірді анықтағыш, Ақылды камера және тағы басқасы бар мобильді</div>
<div class="t" style="left:655.60px;top:211.06px;font-size:11.75px;color:#5c5c5c;font-weight:normal;letter-spacing:0.05px">браузерді орнатыңыз. Сондай-ақ бетбелгілер, құпиясөздер мен басқа</div>
<div class="t" style="left:655.60px;top:228.06px;font-size:11.75px;color:#5c5c5c;font-weight:normal;">деректер әрқашан қол астында болады. <span style="color:#1a73d9">Толығырақ</span></div>
<svg style="left:1104.5px;top:149.5px" width="7" height="7" viewBox="0 0 7 7"><path d="M0 0 L7 7 M7 0 L0 7" stroke="#707070" stroke-width="1"/></svg>
<div class="abs" style="left:448px;top:278px;width:673px;height:462px;background:#fff;border-radius:10px"></div>
<div class="abs" style="left:448px;top:326px;width:673px;height:1px;background:#e9e9e9"></div>
<div class="t" style="left:478.30px;top:293.69px;font-size:18.1px;color:#111;font-weight:normal;">Бетбелгілер</div>
<svg style="left:1090.5px;top:295.5px" width="4" height="15" viewBox="0 0 4 15"><circle cx="2" cy="2" r="1.3" fill="#666"/><circle cx="2" cy="7.5" r="1.3" fill="#666"/><circle cx="2" cy="13" r="1.3" fill="#666"/></svg>
<div class="t" style="left:505.90px;top:349.58px;font-size:13.5px;color:#111;font-weight:normal;">Главные новости Казахстана - Tengrinews.kz</div>
<div class="t" style="left:791.20px;top:351.02px;font-size:11.8px;color:#777;font-weight:normal;">tengrinews.kz</div>
<div class="t" style="left:505.90px;top:378.58px;font-size:13.5px;color:#111;font-weight:normal;">post.mail.kz</div>
<div class="t" style="left:584.80px;top:380.02px;font-size:11.8px;color:#777;font-weight:normal;">post.mail.kz</div>
<div class="t" style="left:505.90px;top:407.58px;font-size:13.5px;color:#111;font-weight:normal;">post.kz</div>
<div class="t" style="left:556.00px;top:409.02px;font-size:11.8px;color:#777;font-weight:normal;">post.kz</div>
<div class="t" style="left:505.90px;top:436.58px;font-size:13.5px;color:#111;font-weight:normal;">Лирика — Уикипедия</div>
<div class="t" style="left:646.60px;top:438.02px;font-size:11.8px;color:#777;font-weight:normal;">kk.wikipedia.org</div>
<div class="t" style="left:505.90px;top:465.58px;font-size:13.5px;color:#111;font-weight:normal;">Баритон — Уикипедия</div>
<div class="t" style="left:652.60px;top:467.02px;font-size:11.8px;color:#777;font-weight:normal;">kk.wikipedia.org</div>
<svg style="left:481px;top:349px" width="16" height="15" viewBox="0 0 16 15"><path d="M0.8 0.3 H15 V3.4 H10.6 L5.3 8.6 L4.6 3.4 H0.8 Z" fill="#16a529"/><path d="M4.8 10.3 L11.6 14.2 H4.2 Z" fill="#16a529"/></svg>
<svg style="left:481px;top:377px" width="16" height="16" viewBox="0 0 16 16">
<path d="M5.5 5.2 H11.3 Q12.6 5.2 12.6 6.5 V12.3 Q12.6 13.6 11.3 13.6 H4.6" fill="none" stroke="#ffc61a" stroke-width="1.8"/>
<path d="M1.4 14.2 V4.8 L7 9.6 L14.4 1.6" fill="none" stroke="#1e8ae6" stroke-width="1.9" stroke-linecap="round" stroke-linejoin="round"/>
</svg>
<svg style="left:481px;top:410px" width="16" height="8" viewBox="0 0 16 8"><path d="M0.8 1.2 Q7 0.8 15.2 1.5 L13.8 2.5 Q13 5 11.5 6.5 Q10.5 3.6 7 3.4 Q3 3 0.8 1.2 Z" fill="#1e56b8"/></svg>
<div class="t" style="left:482.60px;top:437.85px;font-size:12px;color:#222;font-weight:normal;font-family:'Liberation Serif',serif;transform:scaleX(1.08);transform-origin:0 0">W</div>
<div class="t" style="left:482.60px;top:467.85px;font-size:12px;color:#222;font-weight:normal;font-family:'Liberation Serif',serif;transform:scaleX(1.08);transform-origin:0 0">W</div>
<div class="abs" style="left:1152px;top:0px;width:35px;height:34.3px;border:6px solid #ffc800"></div>
<div class="abs" style="left:1114.9px;top:25.9px;width:44.8px;height:44.8px;border:6px solid #ffc800;border-radius:50%;background:#fff"></div>
<svg style="left:1129px;top:36px" width="14" height="25" viewBox="0 0 14 25"><path d="M7.1 0.9 H12.05 V23.9 H7.1 V6.6 Q5 8.6 0.6 10.1 V6.3 Q4.6 4.6 7.1 0.9 Z" fill="#000"/></svg>
<div class="abs" style="left:207.1px;top:121.7px;width:44.8px;height:44.8px;border:6px solid #ffc800;border-radius:50%;background:#fff"></div>
<div class="t" style="left:199.5px;top:127.6px;width:60px;text-align:center;font-size:32px;font-weight:bold;color:#000;line-height:33px">2</div>
<div class="abs" style="left:237.5px;top:216.1px;width:44.8px;height:44.8px;border:6px solid #ffc800;border-radius:50%;background:#fff"></div>
<div class="t" style="left:229.9px;top:222.0px;width:60px;text-align:center;font-size:32px;font-weight:bold;color:#000;line-height:33px">3</div>
<div class="abs" style="left:1074.2px;top:285.9px;width:34.8px;height:32.8px;border:6px solid #ffc800"></div>
<div class="abs" style="left:1035.1px;top:309.9px;width:44.8px;height:44.8px;border:6px solid #ffc800;border-radius:50%;background:#fff"></div>
<div class="t" style="left:1027.5px;top:315.8px;width:60px;text-align:center;font-size:32px;font-weight:bold;color:#000;line-height:33px">4</div>
</body></html>
